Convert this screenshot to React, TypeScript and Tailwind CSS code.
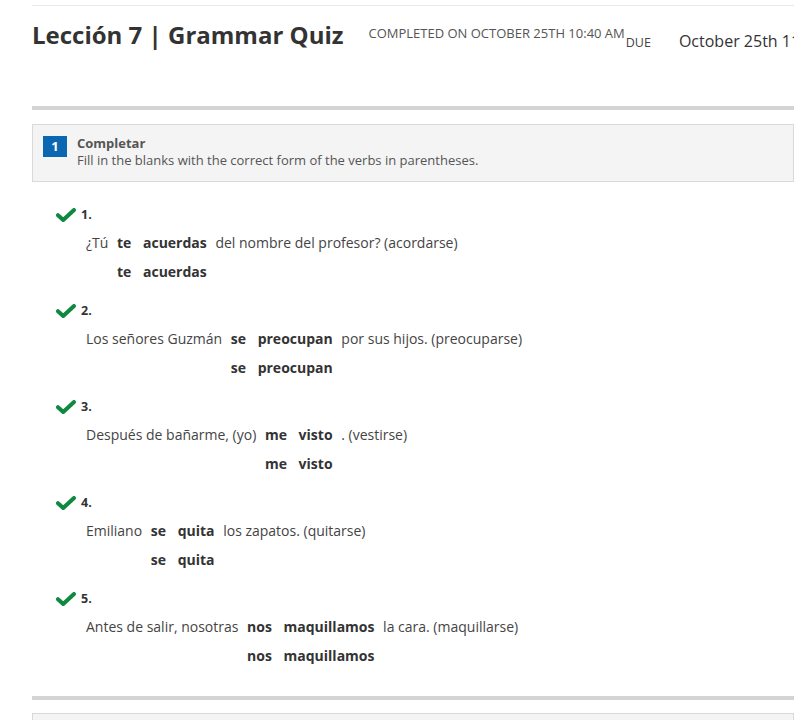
import React from "react";

type Item = { n: number; before: string; words: string[]; after: string };

const items: Item[] = [
  { n: 1, before: "¿Tú", words: ["te", "acuerdas"], after: "del nombre del profesor? (acordarse)" },
  { n: 2, before: "Los señores Guzmán", words: ["se", "preocupan"], after: "por sus hijos. (preocuparse)" },
  { n: 3, before: "Después de bañarme, (yo)", words: ["me", "visto"], after: ". (vestirse)" },
  { n: 4, before: "Emiliano", words: ["se", "quita"], after: "los zapatos. (quitarse)" },
  { n: 5, before: "Antes de salir, nosotras", words: ["nos", "maquillamos"], after: "la cara. (maquillarse)" },
];

function Check() {
  return (
    <svg width="20" height="14" viewBox="0 0 20 14" className="shrink-0">
      <path
        d="M2 7.2 L7.2 12 L18 2"
        fill="none"
        stroke="#0e8a3f"
        strokeWidth="4"
        strokeLinecap="round"
        strokeLinejoin="round"
      />
    </svg>
  );
}

function Blank({ words }: { words: string[] }) {
  return (
    <span className="mx-px font-bold text-[#333]">
      {words.map((w, i) => (
        <React.Fragment key={w}>
          {i > 0 ? " " : null}
          <span className="px-1">{w}</span>
        </React.Fragment>
      ))}
    </span>
  );
}

function QuizItem({ item }: { item: Item }) {
  return (
    <div className="pl-6">
      <div className="flex h-4 items-center gap-[5px]">
        <Check />
        <span className="text-[12.5px] font-bold leading-4 text-[#333]">{item.n}.</span>
      </div>
      <div className="mt-[10px] whitespace-nowrap pl-[30px] text-[14px] leading-5 text-[#444]">
        {item.before} <Blank words={item.words} /> {item.after}
      </div>
      <div className="mt-[9px] whitespace-nowrap pl-[30px] text-[14px] leading-5 text-[#444]">
        <span className="invisible">{item.before} </span>
        <Blank words={item.words} />
      </div>
    </div>
  );
}

export default function App() {
  return (
    <div className="h-[720px] w-full overflow-hidden bg-white pl-8 font-['Open_Sans',sans-serif]">
      <div className="mt-[5px] h-px bg-[#e9e9e9]" />
      <div className="mt-[13px] flex items-start whitespace-nowrap">
        <h1 className="text-[24px] font-bold leading-8 text-[#333]">Lección 7 | Grammar Quiz</h1>
        <span className="ml-[25px] mt-[4px] text-[13px] uppercase leading-5 text-[#555]">
          Completed on October 25th 10:40 AM
        </span>
        <span className="ml-px mt-[16px] text-[12.5px] uppercase leading-4 text-[#444]">Due</span>
        <span className="ml-[28px] mt-[10px] text-[16px] leading-6 text-[#333]">October 25th 11:59 PM</span>
      </div>

      <div className="mt-[53px] h-1 bg-[#d4d4d4]" />

      <div className="mt-[14px] flex gap-[10px] border border-[#d9d9d9] bg-[#f4f4f4] pb-3 pl-[10px] pt-[10px]">
        <div className="mt-px flex h-[21px] w-6 items-center justify-center bg-[#0b67b2] text-[13px] font-bold text-white">
          1
        </div>
        <div className="text-[13px] leading-[17px] text-[#555]">
          <div className="font-bold">Completar</div>
          <div>Fill in the blanks with the correct form of the verbs in parentheses.</div>
        </div>
      </div>

      <div className="mt-[25px] flex flex-col gap-[21px]">
        {items.map((item) => (
          <QuizItem key={item.n} item={item} />
        ))}
      </div>

      <div className="mt-[30px] h-1 bg-[#d4d4d4]" />
      <div className="mt-[13px] h-12 border border-[#d9d9d9] bg-[#f4f4f4]" />
    </div>
  );
}
